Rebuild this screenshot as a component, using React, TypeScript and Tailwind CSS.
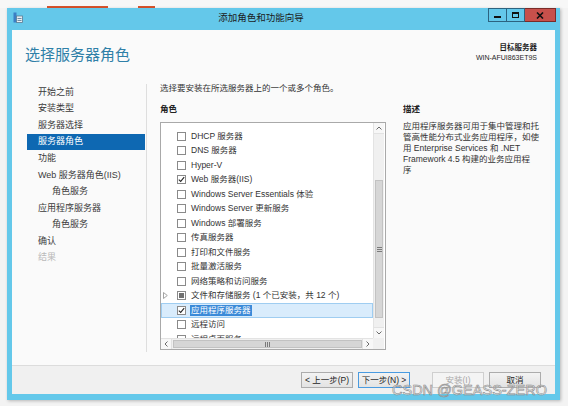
import React from 'react';

const navItems: { t: string; sel?: boolean; indent?: boolean; dis?: boolean }[] = [
  { t: '开始之前' },
  { t: '安装类型' },
  { t: '服务器选择' },
  { t: '服务器角色', sel: true },
  { t: '功能' },
  { t: 'Web 服务器角色(IIS)' },
  { t: '角色服务', indent: true },
  { t: '应用程序服务器' },
  { t: '角色服务', indent: true },
  { t: '确认' },
  { t: '结果', dis: true },
];

const roles: { t: string; c?: 'checked' | 'partial'; exp?: boolean; sel?: boolean }[] = [
  { t: 'DHCP 服务器' },
  { t: 'DNS 服务器' },
  { t: 'Hyper-V' },
  { t: 'Web 服务器(IIS)', c: 'checked' },
  { t: 'Windows Server Essentials 体验' },
  { t: 'Windows Server 更新服务' },
  { t: 'Windows 部署服务' },
  { t: '传真服务器' },
  { t: '打印和文件服务' },
  { t: '批量激活服务' },
  { t: '网络策略和访问服务' },
  { t: '文件和存储服务 (1 个已安装，共 12 个)', c: 'partial', exp: true },
  { t: '应用程序服务器', c: 'checked', sel: true },
  { t: '远程访问' },
  { t: '远程桌面服务' },
];

function CheckBox({ state }: { state?: 'checked' | 'partial' }) {
  return (
    <div className="w-[9px] h-[9px] border border-[#8a8a8a] bg-white flex items-center justify-center shrink-0">
      {state === 'checked' && (
        <svg width="7" height="7" viewBox="0 0 7 7">
          <path d="M0.8 3.6 L2.7 5.4 L6.2 1.2" fill="none" stroke="#262626" strokeWidth="1.1" />
        </svg>
      )}
      {state === 'partial' && <div className="w-[5px] h-[5px] bg-[#707070]" />}
    </div>
  );
}

function Btn({ children, variant }: { children: React.ReactNode; variant?: 'focus' | 'disabled' }) {
  const cls =
    variant === 'disabled'
      ? 'border-[#cfcfcf] bg-[#f4f4f4] text-[#a8a8a8]'
      : variant === 'focus'
      ? 'border-[#4a9be0] bg-gradient-to-b from-[#f3f3f3] to-[#e3e3e3] text-[#1e1e1e]'
      : 'border-[#acacac] bg-gradient-to-b from-[#f3f3f3] to-[#e3e3e3] text-[#1e1e1e]';
  return (
    <div className={`w-[52px] h-[16px] border ${cls} flex items-center justify-center text-[8.5px] leading-none`}>
      {children}
    </div>
  );
}

export default function App() {
  return (
    <div className="w-[568px] h-[406px] bg-[#f3f3f3] flex flex-col overflow-hidden relative [font-family:'Liberation_Sans','Noto_Sans_CJK_SC',sans-serif]">
      {/* desktop strip above window */}
      <div className="h-[8px] flex items-end bg-[#f7f7f7]">
        <div className="ml-[47px] w-[61px] h-[2px] bg-[#d9532c]" />
        <div className="ml-[30px] w-[17px] h-[2px] bg-[#d9532c]" />
      </div>

      {/* window */}
      <div className="ml-[7px] w-[553px] h-[392px] bg-[#64c8ea] flex flex-col shadow-[1px_1px_3px_rgba(0,0,0,0.25)]">
        {/* title bar */}
        <div className="h-[22px] flex items-start shrink-0">
          <div className="w-[23px] h-full pl-[6px] pt-[4px]">
            <svg width="10" height="11" viewBox="0 0 10 11">
              <rect x="0.5" y="0.5" width="3" height="10" fill="#3b7fc4" />
              <rect x="3.5" y="4" width="6" height="6.5" fill="#e8eef3" stroke="#5a7a92" strokeWidth="0.8" />
              <rect x="4.5" y="6" width="4" height="1" fill="#6f8ea6" />
              <rect x="4.5" y="8" width="4" height="1" fill="#6f8ea6" />
            </svg>
          </div>
          <div className="flex-1 text-center pt-[4px] pl-[4px] leading-[12px] text-[9.5px] text-[#1b1b1b]">
            添加角色和功能向导
          </div>
          <div className="flex mr-[4px]">
            <div className="w-[19px] h-[14px] border border-[#2c6380] flex items-center justify-center">
              <div className="w-[7px] h-[2px] bg-[#111] mt-[3px]" />
            </div>
            <div className="w-[18px] h-[14px] border border-l-0 border-[#2c6380] flex items-center justify-center">
              <div className="w-[7px] h-[6px] border-[1.5px] border-[#111] border-t-[2px]" />
            </div>
            <div className="w-[31px] h-[14px] border border-l-0 border-[#7a2b28] bg-[#c7504b] flex items-center justify-center">
              <svg width="8" height="7" viewBox="0 0 8 7">
                <path d="M1 0.5 L7 6.5 M7 0.5 L1 6.5" stroke="#111" strokeWidth="1.6" />
              </svg>
            </div>
          </div>
        </div>

        {/* client */}
        <div className="mx-[5px] h-[364px] bg-[#fafafa] flex flex-col shrink-0">
          {/* header */}
          <div className="h-[52px] flex justify-between items-start pl-[13px] pr-[18px] shrink-0">
            <div className="mt-[15px] leading-[20px] text-[15px] text-[#2f80a8]">选择服务器角色</div>
            <div className="mt-[13px] text-right leading-[10px] text-[#1e1e1e]">
              <div className="text-[7.5px] font-bold">目标服务器</div>
              <div className="text-[7px]">WIN-AFUI863ET9S</div>
            </div>
          </div>

          {/* body */}
          <div className="h-[283px] flex items-start shrink-0">
            {/* nav */}
            <div className="w-[135px] h-[268px] mt-[2px] border-r border-[#dedede] flex flex-col shrink-0">
              {navItems.map((n, i) => (
                <div
                  key={i}
                  className={`ml-[15px] w-[118px] h-[16.6px] flex items-center text-[9px] whitespace-nowrap ${
                    n.indent ? 'pl-[25px]' : 'pl-[11px]'
                  } ${n.sel ? 'bg-[#0e68b2] text-white' : n.dis ? 'text-[#b9b9b9]' : 'text-[#3a3a3a]'}`}
                >
                  {n.t}
                </div>
              ))}
            </div>

            {/* main */}
            <div className="ml-[13px] flex flex-col">
              <div className="h-[12px] leading-[12px] text-[8.5px] text-[#333] whitespace-nowrap">
                选择要安装在所选服务器上的一个或多个角色。
              </div>
              <div className="flex mt-[9px]">
                {/* roles list */}
                <div className="w-[226px] flex flex-col">
                  <div className="h-[12px] leading-[12px] text-[8.5px] font-bold text-[#222]">角色</div>
                  <div className="mt-[7px] w-[226px] h-[228px] border border-[#a9a9a9] bg-white grid grid-cols-[212px_11px] grid-rows-[215px_11px]">
                    {/* viewport */}
                    <div className="overflow-hidden flex flex-col pt-[6px]">
                      {roles.map((r, i) => (
                        <div
                          key={i}
                          className={`h-[14.5px] shrink-0 flex items-center ${
                            r.sel ? 'bg-[#d9ecfc] shadow-[inset_0_0_0_1px_#9fcdf1]' : ''
                          }`}
                        >
                          <div className="w-[16px] h-full flex items-center pl-[2px] shrink-0">
                            {r.exp && (
                              <svg width="5" height="7" viewBox="0 0 5 7">
                                <path d="M0.5 0.5 L4.3 3.5 L0.5 6.5 Z" fill="none" stroke="#9a9a9a" strokeWidth="0.9" />
                              </svg>
                            )}
                          </div>
                          <CheckBox state={r.c} />
                          <span
                            className={`text-[8.5px] leading-[11px] whitespace-nowrap ${
                              r.sel ? 'bg-[#3b8ad8] text-white px-[1px] ml-[4px]' : 'text-[#333] ml-[5px]'
                            }`}
                          >
                            {r.t}
                          </span>
                        </div>
                      ))}
                    </div>
                    {/* vertical scrollbar */}
                    <div className="bg-[#f0f0f0] border-l border-[#e3e3e3] flex flex-col">
                      <div className="h-[11px] flex items-center justify-center bg-[#f7f7f7] border-b border-[#e2e2e2]">
                        <svg width="6" height="4" viewBox="0 0 6 4">
                          <path d="M0.5 3.5 L3 1 L5.5 3.5" fill="none" stroke="#6a6a6a" strokeWidth="1" />
                        </svg>
                      </div>
                      <div className="flex-1 flex flex-col">
                        <div className="h-[46px]" />
                        <div className="h-[138px] mx-[1px] bg-[#d6d6d6] border border-[#c2c2c2] flex flex-col items-center justify-center gap-[1px]">
                          <div className="w-[5px] h-[1px] bg-[#7a7a7a]" />
                          <div className="w-[5px] h-[1px] bg-[#7a7a7a]" />
                          <div className="w-[5px] h-[1px] bg-[#7a7a7a]" />
                        </div>
                      </div>
                      <div className="h-[11px] flex items-center justify-center bg-[#f7f7f7] border-t border-[#e2e2e2]">
                        <svg width="6" height="4" viewBox="0 0 6 4">
                          <path d="M0.5 0.5 L3 3 L5.5 0.5" fill="none" stroke="#6a6a6a" strokeWidth="1" />
                        </svg>
                      </div>
                    </div>
                    {/* horizontal scrollbar */}
                    <div className="bg-[#f0f0f0] border-t border-[#e3e3e3] flex">
                      <div className="w-[11px] flex items-center justify-center bg-[#f7f7f7] border-r border-[#e2e2e2]">
                        <svg width="4" height="6" viewBox="0 0 4 6">
                          <path d="M3.5 0.5 L1 3 L3.5 5.5" fill="none" stroke="#6a6a6a" strokeWidth="1" />
                        </svg>
                      </div>
                      <div className="flex-1 my-[1px] ml-[1px] bg-[#d6d6d6] border border-[#c2c2c2] flex items-center justify-center gap-[1px]">
                        <div className="w-[1px] h-[5px] bg-[#7a7a7a]" />
                        <div className="w-[1px] h-[5px] bg-[#7a7a7a]" />
                        <div className="w-[1px] h-[5px] bg-[#7a7a7a]" />
                      </div>
                      <div className="w-[11px] flex items-center justify-center bg-[#f7f7f7] border-l border-[#e2e2e2]">
                        <svg width="4" height="6" viewBox="0 0 4 6">
                          <path d="M0.5 0.5 L3 3 L0.5 5.5" fill="none" stroke="#6a6a6a" strokeWidth="1" />
                        </svg>
                      </div>
                    </div>
                    <div className="bg-[#f0f0f0]" />
                  </div>
                </div>

                {/* description */}
                <div className="ml-[17px] w-[142px] flex flex-col">
                  <div className="h-[12px] leading-[12px] text-[8.5px] font-bold text-[#222]">描述</div>
                  <div className="mt-[5.5px] text-[8.5px] leading-[11.2px] text-[#333] whitespace-nowrap">
                    应用程序服务器可用于集中管理和托
                    <br />
                    管高性能分布式业务应用程序，如使
                    <br />
                    用 Enterprise Services 和 .NET
                    <br />
                    Framework 4.5 构建的业务应用程
                    <br />序
                  </div>
                </div>
              </div>
            </div>
          </div>

          {/* footer */}
          <div className="h-[29px] border-t border-[#dcdcdc] bg-[#f0f0f0] flex justify-end items-start pt-[6px] pr-[14px] shrink-0">
            <Btn>&lt; 上一步(P)</Btn>
            <div className="ml-[5px]">
              <Btn variant="focus">下一步(N) &gt;</Btn>
            </div>
            <div className="ml-[22px]">
              <Btn variant="disabled">安装(I)</Btn>
            </div>
            <div className="ml-[5px]">
              <Btn>取消</Btn>
            </div>
          </div>
        </div>
      </div>

      {/* watermark */}
      <div className="absolute left-[392px] top-[382px] text-[14.5px] leading-[17px] text-[rgba(255,255,255,0.55)] [-webkit-text-stroke:0.6px_#8a8a8a] whitespace-nowrap">
        CSDN @GEASS-ZERO
      </div>
    </div>
  );
}
